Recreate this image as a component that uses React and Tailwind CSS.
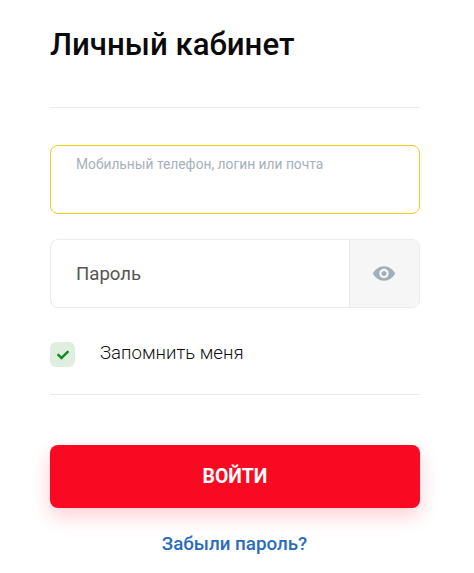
import React from "react";

function EyeIcon() {
  return (
    <svg viewBox="0 0 576 512" className="w-[24px] h-[21px] mr-[2px] fill-[#9fb0bb]">
      <path d="M288 80C167 80 64 160 16 256c48 96 151 176 272 176s224-80 272-176C512 160 409 80 288 80zm0 290c-63 0-114-51-114-114s51-114 114-114 114 51 114 114-51 114-114 114zm0-176c-34 0-62 28-62 62s28 62 62 62 62-28 62-62-28-62-62-62z" />
    </svg>
  );
}

function CheckIcon() {
  return (
    <svg viewBox="0 0 512 512" className="w-[12px] h-[12px] fill-[#0f8a1f]">
      <path d="M174 439 7 272c-10-10-10-26 0-36l36-36c10-10 26-10 36 0l113 113L433 72c10-10 26-10 36 0l36 36c10 10 10 26 0 36L210 439c-10 10-26 10-36 0z" />
    </svg>
  );
}

export default function App() {
  return (
    <div className="w-[474px] h-[573px] overflow-hidden bg-white font-['Roboto',sans-serif] pl-[50px] pr-[54px] pt-[26px] box-border">
      <h1 className="text-[31.2px] leading-[38px] font-medium text-[#0a0a0a]">Личный кабинет</h1>
      <div className="mt-[43px] border-t border-[#ebebeb]" />

      <div className="mt-[37px] h-[69px] rounded-[8px] border border-[#f0cc20] px-[25px] pt-[9px] text-[13.8px] leading-[18px] text-[#a5b1bb]">
        Мобильный телефон, логин или почта
      </div>

      <div className="mt-[25px] h-[69px] flex rounded-[8px] border border-[#ebebeb] overflow-hidden">
        <div className="flex-1 flex items-center pl-[25px] pt-[3px] text-[18.6px] text-[#555]">Пароль</div>
        <div className="w-[70px] flex items-center justify-center bg-[#f6f6f6] border-l border-[#ebebeb]">
          <EyeIcon />
        </div>
      </div>

      <label className="mt-[34px] flex items-center h-[25px]">
        <span className="w-[25px] h-[25px] rounded-[6px] bg-[#e0eee0] flex items-center justify-center">
          <CheckIcon />
        </span>
        <span className="ml-[25px] text-[18.6px] font-light text-[#111] -mt-[2px]">Запомнить меня</span>
      </label>
      <div className="mt-[27px] border-t border-[#ebebeb]" />

      <button className="mt-[50px] w-full h-[63px] rounded-[8px] bg-[#f90a22] text-white text-[19.4px] font-bold shadow-[0_8px_20px_rgba(249,10,34,0.2)]">
        ВОЙТИ
      </button>
      <div className="mt-[24px] pr-[1px] text-center text-[18.8px] leading-[24px] font-medium text-[#2a6bbd]">Забыли пароль?</div>
    </div>
  );
}
